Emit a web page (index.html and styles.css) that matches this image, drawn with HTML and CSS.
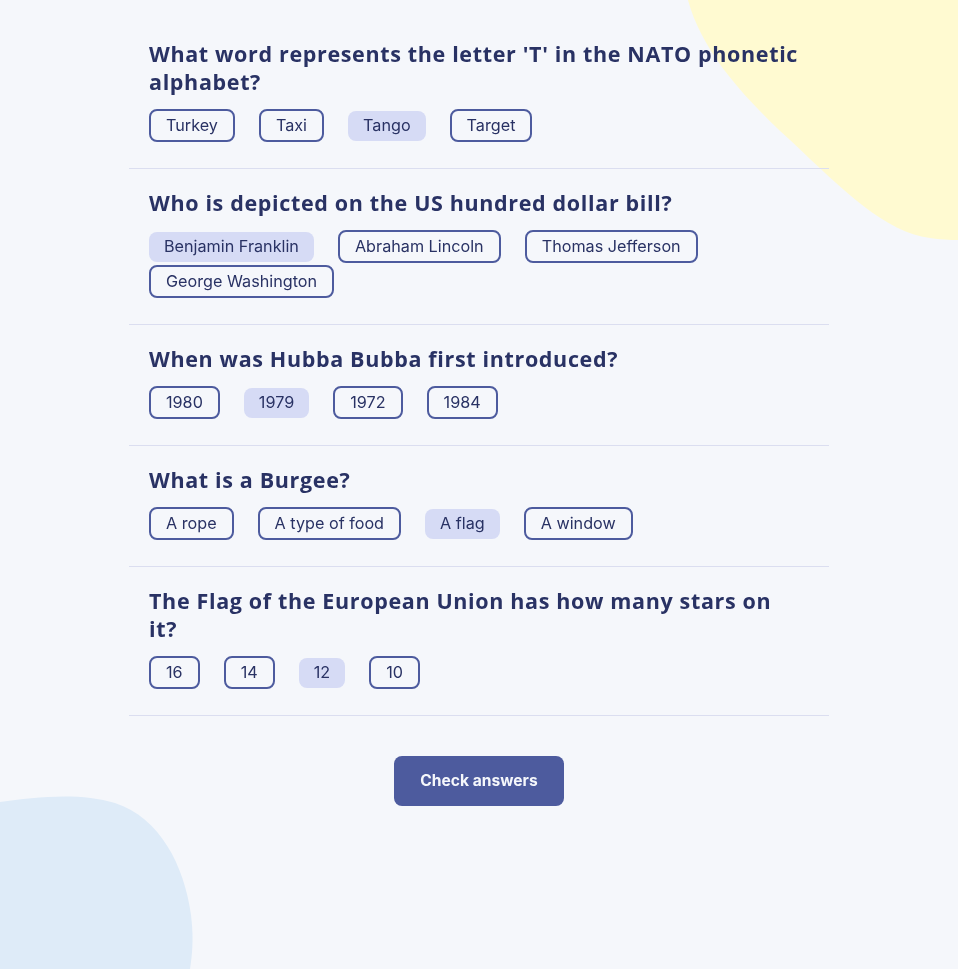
FILE: index.html
```html
<!DOCTYPE html>
<html lang="en">
<head>
<meta charset="utf-8">
<title>Quizzical</title>
<link rel="stylesheet" href="styles.css">
</head>
<body>
<svg class="blob blob-yellow" width="270" height="240" viewBox="688 0 270 240" aria-hidden="true">
  <path d="M688,0 C700,45 735,90 790,140 C845,192 885,232 930,238 C945,240 955,240 958,240 L958,0 Z" fill="#FFFAD1"/>
</svg>
<svg class="blob blob-blue" width="195" height="175" viewBox="0 794 195 175" aria-hidden="true">
  <path d="M0,802 C35,797 80,792 115,803 C160,818 184,865 191,915 C194,940 192,955 190,969 L0,969 Z" fill="#DEEBF8"/>
</svg>
<main class="quiz">
  <section class="question">
    <h2 class="q-title">What word represents the letter 'T' in the NATO phonetic alphabet?</h2>
    <div class="answers">
      <button class="answer">Turkey</button>
      <button class="answer">Taxi</button>
      <button class="answer selected">Tango</button>
      <button class="answer">Target</button>
    </div>
  </section>
  <section class="question">
    <h2 class="q-title">Who is depicted on the US hundred dollar bill?</h2>
    <div class="answers">
      <button class="answer selected">Benjamin Franklin</button>
      <button class="answer">Abraham Lincoln</button>
      <button class="answer">Thomas Jefferson</button>
      <button class="answer">George Washington</button>
    </div>
  </section>
  <section class="question">
    <h2 class="q-title">When was Hubba Bubba first introduced?</h2>
    <div class="answers">
      <button class="answer">1980</button>
      <button class="answer selected">1979</button>
      <button class="answer">1972</button>
      <button class="answer">1984</button>
    </div>
  </section>
  <section class="question">
    <h2 class="q-title">What is a Burgee?</h2>
    <div class="answers">
      <button class="answer">A rope</button>
      <button class="answer">A type of food</button>
      <button class="answer selected">A flag</button>
      <button class="answer">A window</button>
    </div>
  </section>
  <section class="question">
    <h2 class="q-title">The Flag of the European Union has how many stars on it?</h2>
    <div class="answers">
      <button class="answer">16</button>
      <button class="answer">14</button>
      <button class="answer selected">12</button>
      <button class="answer">10</button>
    </div>
  </section>
  <div class="actions">
    <button class="check-btn">Check answers</button>
  </div>
</main>
</body>
</html>
```

FILE: styles.css
```css
* { box-sizing: border-box; }
html, body {
  margin: 0;
  height: 100%;
}
body {
  background: #F5F7FB;
  color: #293264;
  font-family: Inter, "Noto Sans", sans-serif;
  overflow: hidden;
  position: relative;
}
.blob {
  position: fixed;
  z-index: 0;
  display: block;
}
.blob-yellow { top: 0; right: 0; }
.blob-blue { bottom: 0; left: 0; }
.quiz {
  position: relative;
  z-index: 1;
  width: 700px;
  margin: 0 auto;
  padding-top: 20px;
}
.question {
  padding: 20px 20px 26px;
  border-bottom: 1px solid #DBDEF0;
}
.q-title {
  margin: 0 0 13px;
  max-width: 652px;
  font-family: "Open Sans", sans-serif;
  font-weight: 700;
  font-size: 21.5px;
  line-height: 28px;
  letter-spacing: 0.65px;
  color: #293264;
}
.answers {
  display: flex;
  flex-wrap: wrap;
  align-items: center;
  column-gap: 24px;
  row-gap: 2px;
}
.answer {
  font-family: Inter, sans-serif;
  font-size: 16.2px;
  line-height: 17px;
  color: #293264;
  background: transparent;
  border: 2px solid #4D5B9E;
  border-radius: 8px;
  padding: 6px 15px;
  margin: 0;
  cursor: pointer;
}
.answer.selected {
  background: #D6DBF5;
  border: none;
  padding: 6.5px 15px;
}
.actions {
  display: flex;
  justify-content: center;
  padding-top: 40px;
}
.check-btn {
  font-family: Inter, sans-serif;
  font-weight: 700;
  font-size: 15.6px;
  line-height: 18px;
  color: #F5F7FB;
  background: #4D5B9E;
  border: none;
  border-radius: 8px;
  width: 170px;
  height: 50px;
  padding: 0;
  cursor: pointer;
}
```
